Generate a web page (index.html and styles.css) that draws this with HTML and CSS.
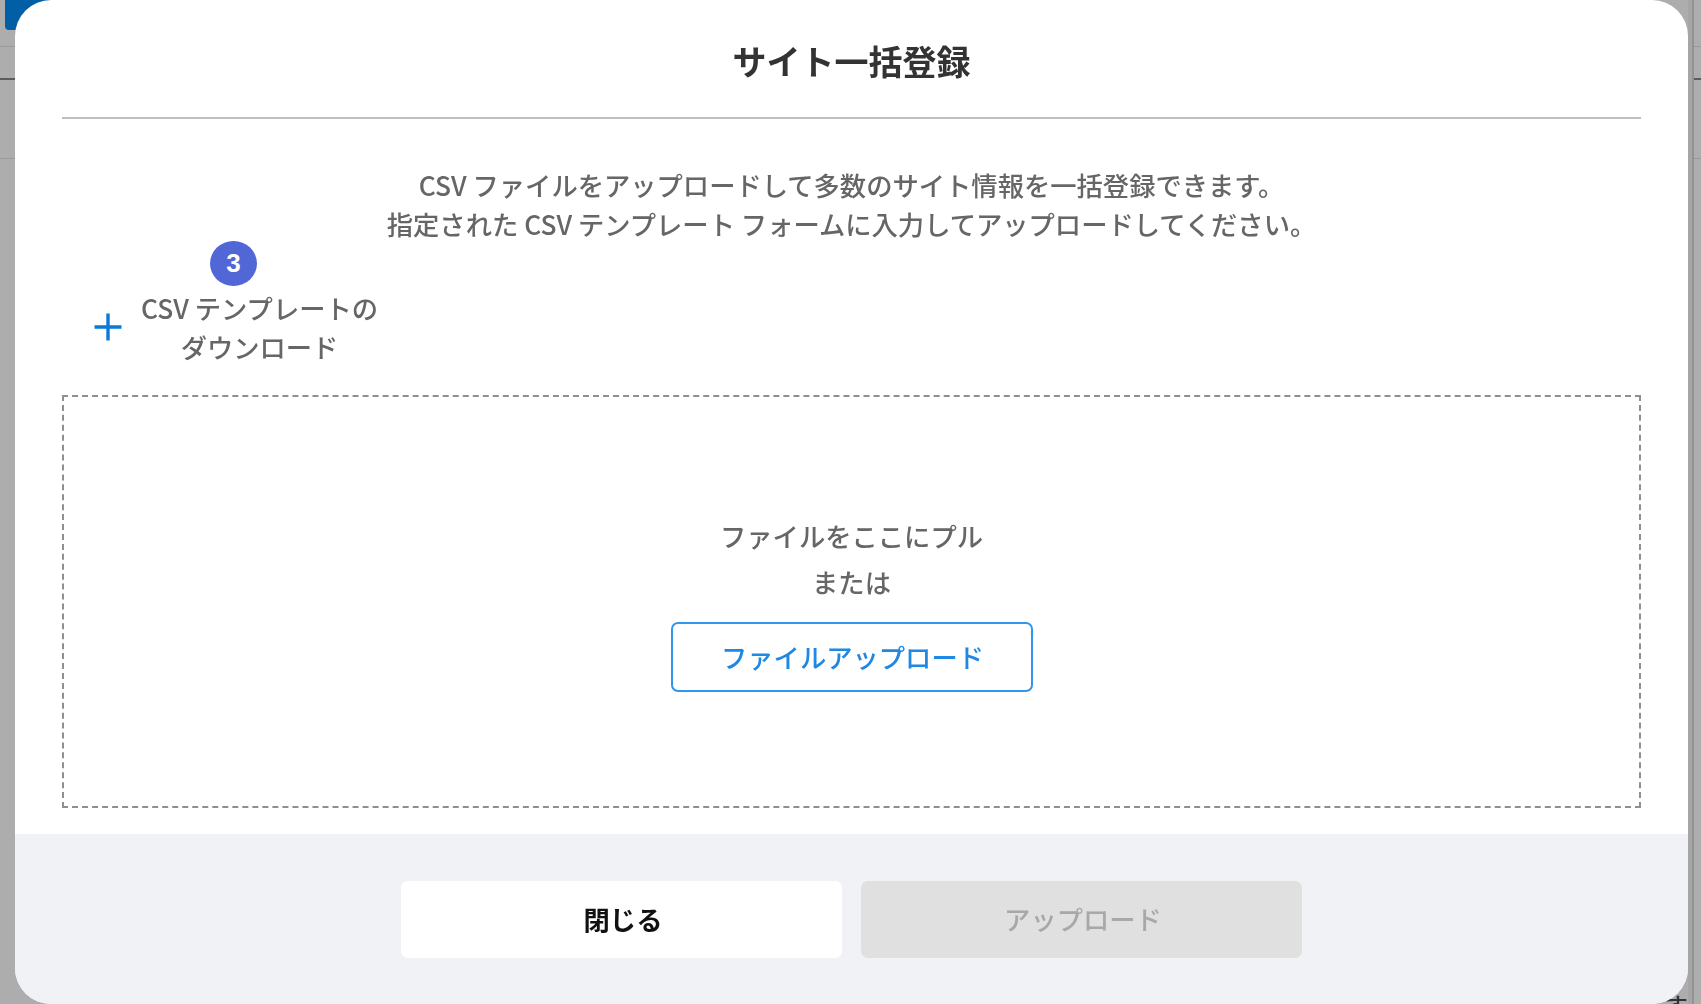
FILE: index.html
```html
<!DOCTYPE html>
<html lang="ja">
<head>
<meta charset="utf-8">
<title>サイト一括登録</title>
<link rel="stylesheet" href="styles.css">
</head>
<body>
<div class="page">
  <div class="page-row page-row-top"><span class="page-logo"></span></div>
  <div class="page-row page-row-mid"></div>
  <div class="page-row page-row-low"></div>
  <span class="page-glyph">す</span>
  <div class="scrollbar"></div>
</div>
<div class="modal">
  <div class="modal-body">
    <h1 class="modal-title">サイト一括登録</h1>
    <p class="description">CSV ファイルをアップロードして多数のサイト情報を一括登録できます。<br>指定された CSV テンプレート フォームに入力してアップロードしてください。</p>
    <div class="template-row">
      <svg class="plus-icon" viewBox="0 0 28 28" aria-hidden="true"><path d="M14 0.5V27.5M0.5 14H27.5"/></svg>
      <span class="template-link">CSV テンプレートの<br>ダウンロード</span>
      <span class="step-badge">3</span>
    </div>
    <div class="dropzone">
      <p class="drop-text">ファイルをここにプル</p>
      <p class="drop-text">または</p>
      <button class="file-button" type="button">ファイルアップロード</button>
    </div>
  </div>
  <div class="modal-footer">
    <button class="footer-button close-button" type="button">閉じる</button>
    <button class="footer-button upload-button" type="button">アップロード</button>
  </div>
</div>
</body>
</html>
```
FILE: styles.css
```css
* { box-sizing: border-box; }
html, body { margin: 0; height: 100%; overflow: hidden; }
body {
  background: #adadad;
  font-family: "Noto Sans CJK JP", "Noto Sans", sans-serif;
  color: #666;
  font-weight: 500;
  filter: blur(0.45px);
}
.page { position: absolute; inset: 0; display: flex; flex-direction: column; }
.page-row { border-bottom: 1px solid #999; }
.page-row-top { height: 47px; position: relative; border-bottom-color: #9a9a9a; }
.page-row-mid { height: 33px; border-bottom: 2px solid #5c5c5c; }
.page-row-low { height: 79px; }
.page-logo { position: absolute; left: 5px; top: 0; width: 60px; height: 30px; background: #005fa5; border-radius: 0 0 4px 4px; }
.page-glyph { position: absolute; left: 1664px; top: 988px; font-size: 24px; line-height: 34px; color: #333; }
.scrollbar { position: absolute; top: 0; bottom: 0; left: 1688px; width: 6px; background: #a6a6a6; border-right: 2px solid #939393; }
.modal {
  position: absolute; left: 15px; top: 0; width: 1673px; height: 1004px;
  background: #fff; border-radius: 36px; overflow: hidden;
  display: flex; flex-direction: column;
}
.modal-body { flex: 1; padding: 0 47px; display: flex; flex-direction: column; }
.modal-title {
  margin: 0; height: 119px; padding-top: 38px;
  text-align: center; font-size: 34px; line-height: 46px; font-weight: 700; color: #333;
  border-bottom: 2px solid #bdbdc2;
}
.description { margin: 46px 0 0; text-align: center; font-size: 26.3px; line-height: 39px; }
.template-row {
  position: relative; display: flex; align-items: center; gap: 19px;
  margin: 44px 0 0 32px; height: 79px;
}
.plus-icon { width: 28px; height: 28px; flex: none; }
.plus-icon path { stroke: #0a7ad6; stroke-width: 3.4; fill: none; }
.template-link { text-align: center; font-size: 26.3px; line-height: 39px; }
.step-badge {
  position: absolute; left: 116px; top: -46px; width: 47px; height: 45px; border-radius: 50%;
  background: #5267d6; color: #fff; font: 700 26px/45px "Liberation Sans", sans-serif; text-align: center;
}
.dropzone {
  margin-top: 29px; height: 413px; border: 2px dashed #8f8f8f;
  display: flex; flex-direction: column; align-items: center; padding-top: 116px;
}
.drop-text { margin: 0; font-size: 26.3px; line-height: 46px; }
.file-button {
  margin-top: 17px; width: 362px; height: 70px; padding-left: 8px; background: #fff;
  border: 2px solid #2f97ec; border-radius: 7px; color: #1e88e5;
  font: 500 26.3px/1 "Noto Sans CJK JP", sans-serif;
}
.modal-footer { height: 170px; background: #f1f2f6; display: flex; justify-content: center; gap: 19px; padding-top: 47px; }
.footer-button {
  width: 441px; height: 77px; border: 0; border-radius: 7px; padding: 0 0 0 3px;
  font: 700 26.3px/1 "Noto Sans CJK JP", sans-serif;
}
.close-button { background: #fff; color: #111; }
.upload-button { background: #e0e0e0; color: #a8a8a8; font-weight: 500; }
```
